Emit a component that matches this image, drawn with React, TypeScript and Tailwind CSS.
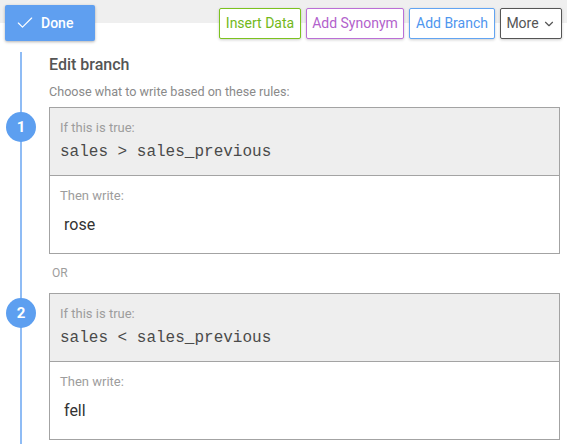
import { Check, ChevronDown } from "lucide-react";

type Branch = {
    n: number;
    condition: string;
    output: string;
};

const branches: Branch[] = [
    { n: 1, condition: "sales > sales_previous", output: "rose" },
    { n: 2, condition: "sales < sales_previous", output: "fell" },
];

function BranchRow({ n, condition, output }: Branch) {
    return (
        <div className="flex items-start gap-[13px] -ml-[43px]">
            <div className="mt-[5px] flex h-[30px] w-[30px] shrink-0 items-center justify-center rounded-full bg-[#5d9ff0] text-[15px] font-bold text-white">
                {n}
            </div>
            <div className="flex-1 border border-[#a3a3a3]">
                <div className="bg-[#eeeeee] px-[10px] pt-[11px] pb-[13px]">
                    <div className="text-[13px] leading-[18px] text-[#9d9d9d]">If this is true:</div>
                    <div className="mt-[5px] font-['Liberation_Mono',monospace] text-[16px] leading-[20px] text-[#4a4a4a]">
                        {condition}
                    </div>
                </div>
                <div className="border-t border-[#a3a3a3] px-[10px] pt-[11px] pb-[16px]">
                    <div className="text-[13px] leading-[18px] text-[#9d9d9d]">Then write:</div>
                    <div className="mt-[8px] pl-[4px] text-[16px] leading-[24px] text-[#333]">{output}</div>
                </div>
            </div>
        </div>
    );
}

export default function App() {
    return (
        <div className="h-[444px] overflow-hidden bg-white font-['Roboto',sans-serif]">
            <div className="flex items-start justify-between bg-[linear-gradient(#efefef_23px,#ffffff_23px)] px-[5px] pt-[5px]">
                <button className="flex h-[36px] w-[90px] items-center gap-[6px] rounded-[2px] bg-[#5f9ff0] pl-[10px] text-[14px] font-medium text-white shadow-[0_1px_3px_rgba(0,0,0,0.3)]">
                    <Check className="h-[20px] w-[20px]" strokeWidth={1.4} />
                    Done
                </button>
                <div className="mt-[3px] flex gap-[5px]">
                    <button className="h-[31px] w-[82px] rounded-[2px] border border-[#7cc21f] bg-white text-[14px] text-[#72b81a] shadow-[0_1px_3px_rgba(0,0,0,0.2)]">
                        Insert Data
                    </button>
                    <button className="h-[31px] w-[98px] rounded-[2px] border border-[#bb6fd6] bg-white text-[14px] text-[#b262cc] shadow-[0_1px_3px_rgba(0,0,0,0.2)]">
                        Add Synonym
                    </button>
                    <button className="h-[31px] w-[86px] rounded-[2px] border border-[#62a4f2] bg-white text-[14px] text-[#4f96ee] shadow-[0_1px_3px_rgba(0,0,0,0.2)]">
                        Add Branch
                    </button>
                    <button className="flex h-[31px] w-[62px] items-center justify-center gap-[3px] rounded-[2px] border border-[#555] bg-white text-[14px] text-[#555] shadow-[0_1px_3px_rgba(0,0,0,0.2)]">
                        More
                        <ChevronDown className="h-[14px] w-[14px]" strokeWidth={2} />
                    </button>
                </div>
            </div>

            <div className="ml-[20px] mt-[11px] border-l-2 border-[#8fbcf5] pl-[27px] pr-[7px] pt-[3px] pb-[40px]">
                <div className="text-[16px] font-medium leading-[20px] text-[#555]">Edit branch</div>
                <div className="mt-[9px] text-[12.6px] leading-[16px] text-[#8a8a8a]">
                    Choose what to write based on these rules:
                </div>
                <div className="mt-[7px]">
                    <BranchRow {...branches[0]} />
                </div>
                <div className="mt-[11px] pl-[3px] text-[12px] leading-[16px] text-[#9d9d9d]">OR</div>
                <div className="mt-[12px]">
                    <BranchRow {...branches[1]} />
                </div>
            </div>
        </div>
    );
}
